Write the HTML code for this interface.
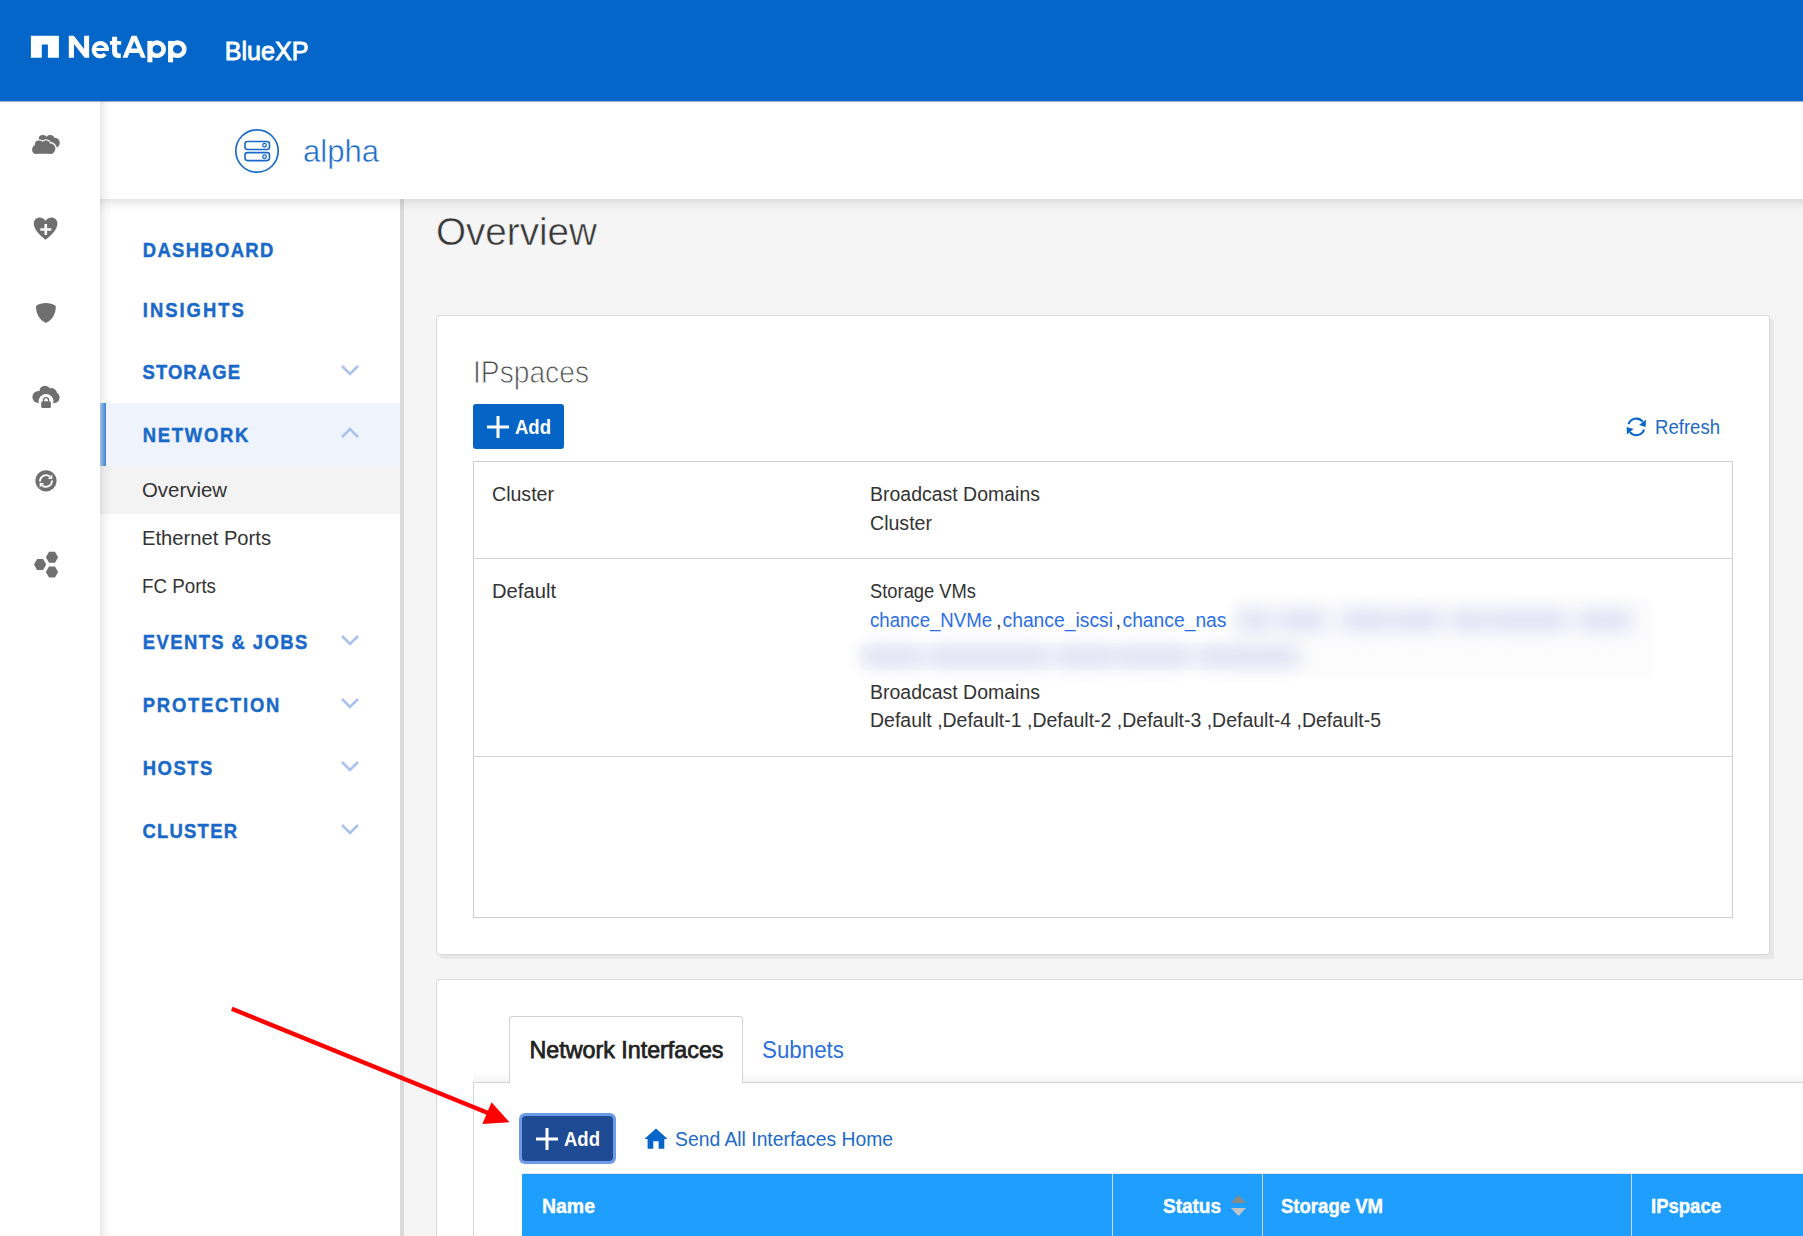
<!DOCTYPE html>
<html><head><meta charset="utf-8"><title>NetApp BlueXP - Network Overview</title>
<style>
html,body{margin:0;padding:0;width:1803px;height:1236px;overflow:hidden;background:#f5f5f5;font-family:"Liberation Sans",sans-serif;}
.a{position:absolute;box-sizing:border-box;}
svg.ov{position:absolute;left:0;top:0;width:1803px;height:1236px;overflow:visible;}
svg text{font-family:"Liberation Sans",sans-serif;}
.b{font-weight:bold;}
</style></head><body>
<!-- top bar -->
<div class="a" style="left:0;top:0;width:1803px;height:101px;background:#0366c8;box-shadow:0 1px 1px rgba(0,40,120,.35);z-index:3"></div>
<!-- icon rail -->
<div class="a" style="left:0;top:101px;width:100px;height:1135px;background:#fff"></div>
<!-- nav panel -->
<div class="a" style="left:100px;top:198px;width:300px;height:1038px;background:#fff"></div>
<div class="a" style="left:100px;top:403px;width:300px;height:63px;background:#eef3fc;z-index:3"></div>
<div class="a" style="left:100px;top:466px;width:300px;height:48px;background:#f3f3f3"></div>
<div class="a" style="left:100px;top:403px;width:6px;height:63px;background:linear-gradient(to right,#a3c2e4,#3a82d3);z-index:3"></div>
<!-- gray bar -->
<div class="a" style="left:400px;top:198px;width:4px;height:1038px;background:#dadada"></div>
<!-- header -->
<div class="a" style="left:100px;top:101px;width:1703px;height:98px;background:#fff;z-index:2"></div>
<div class="a" style="left:100px;top:199px;width:1703px;height:13px;background:linear-gradient(to bottom,rgba(0,0,0,.095),rgba(0,0,0,.04) 45%,rgba(0,0,0,0));z-index:2"></div>
<!-- left inset shadow -->
<div class="a" style="left:100px;top:101px;width:13px;height:1135px;background:linear-gradient(to right,rgba(0,0,0,.085),rgba(0,0,0,.03) 40%,rgba(0,0,0,.01) 75%,rgba(0,0,0,0));z-index:2"></div>

<!-- card 1 -->
<div class="a" style="left:436px;top:315px;width:1334px;height:640px;background:#fff;border:1px solid #d8d8d8;border-radius:3px;box-shadow:4px 4px 1px rgba(0,0,0,.055)"></div>
<!-- table 1 -->
<div class="a" style="left:473px;top:461px;width:1260px;height:457px;border:1px solid #cfcfcf"></div>
<div class="a" style="left:473px;top:558px;width:1260px;height:1px;background:#d2d2d2"></div>
<div class="a" style="left:473px;top:756px;width:1260px;height:1px;background:#d2d2d2"></div>
<!-- Add button 1 -->
<div class="a" style="left:473px;top:404px;width:91px;height:45px;background:#0565c6;border-radius:3px"></div>

<!-- card 2 -->
<div class="a" style="left:436px;top:979px;width:1400px;height:300px;background:#fff;border:1px solid #d8d8d8;border-radius:3px"></div>
<!-- tab panel shadow strip -->
<div class="a" style="left:473px;top:1072px;width:1330px;height:10px;background:linear-gradient(to bottom,rgba(0,0,0,0),rgba(0,0,0,.045))"></div>
<div class="a" style="left:473px;top:1082px;width:1330px;height:200px;border-top:1px solid #d3d3d3;border-left:1px solid #d3d3d3;background:#fff"></div>
<div class="a" style="left:509px;top:1016px;width:234px;height:67px;border:1px solid #d3d3d3;border-bottom:none;border-radius:3px 3px 0 0;background:#fff"></div>
<!-- Add button 2 -->
<div class="a" style="left:519px;top:1113px;width:97px;height:51px;background:#6c9be8;border-radius:6px"></div>
<div class="a" style="left:522px;top:1116px;width:91px;height:45px;background:#1f4a94;border-radius:4px"></div>
<!-- table header -->
<div class="a" style="left:522px;top:1173px;width:1290px;height:70px;background:#1e9fff;border-top:1px solid #e6e6e6"></div>
<div class="a" style="left:1112px;top:1174px;width:1px;height:70px;background:#d0d6dc"></div>
<div class="a" style="left:1262px;top:1174px;width:1px;height:70px;background:#d0d6dc"></div>
<div class="a" style="left:1631px;top:1174px;width:1px;height:70px;background:#d0d6dc"></div>

<!-- blurred storage vms -->
<div class="a" style="left:860px;top:643px;width:372px;height:27px;background:#fbfbfd"></div>
<div class="a" style="left:1232px;top:598px;width:420px;height:78px;background:#fcfcfd;filter:blur(3px)"></div>
<div class="a" style="left:0;top:0;width:1803px;height:1236px;filter:blur(9px)">
<div class="a" style="left:1236px;top:611px;width:36px;height:19px;background:#dcdef3;border-radius:9px"></div>
<div class="a" style="left:1276px;top:611px;width:52px;height:19px;background:#dcdef3;border-radius:9px"></div>
<div class="a" style="left:1339px;top:611px;width:55px;height:19px;background:#dcdef3;border-radius:9px"></div>
<div class="a" style="left:1393px;top:611px;width:50px;height:19px;background:#dcdef3;border-radius:9px"></div>
<div class="a" style="left:1449px;top:611px;width:42px;height:19px;background:#dcdef3;border-radius:9px"></div>
<div class="a" style="left:1490px;top:611px;width:79px;height:19px;background:#dcdef3;border-radius:9px"></div>
<div class="a" style="left:1576px;top:611px;width:57px;height:19px;background:#dcdef3;border-radius:9px"></div>
<div class="a" style="left:861px;top:647px;width:63px;height:19px;background:#dcdef3;border-radius:9px"></div>
<div class="a" style="left:927px;top:647px;width:124px;height:19px;background:#dcdef3;border-radius:9px"></div>
<div class="a" style="left:1054px;top:647px;width:63px;height:19px;background:#dcdef3;border-radius:9px"></div>
<div class="a" style="left:1116px;top:647px;width:76px;height:19px;background:#dcdef3;border-radius:9px"></div>
<div class="a" style="left:1196px;top:647px;width:105px;height:19px;background:#dcdef3;border-radius:9px"></div>
</div>
<svg class="ov" width="1803" height="1236" viewBox="0 0 1803 1236" style="z-index:5">
<!-- logo -->
<path d="M30.9 35.8H58.9V57.85H47.9V44.5H41.8V57.85H30.9Z" fill="#fff"/>
<g fill="#fff">
<path d="M68.8 57.8V35.8H73.8L84.1 49V35.8H89.1V57.8H84.6L74 44V57.8Z"/>
<path d="M112.1 36.8H117.1V41H121.2V44.8H117.1V51.3Q117.1 53.4 119.2 53.4H120.8V57.9H118Q112.1 57.9 112.1 51.8V44.8H109.9V41H112.1Z"/>
<path fill-rule="evenodd" d="M122.5 57.8L131.6 35.7H136.7L145.8 57.8H141L139.1 53H129.4L127.5 57.8ZM131.1 48.4H137.3L134.2 40.9Z"/>
<rect x="94" y="47.9" width="14.9" height="3.1"/>
<rect x="147.4" y="40.9" width="5" height="21.4"/>
<rect x="168.1" y="40.9" width="5" height="21.4"/>
</g>
<g fill="none" stroke="#fff">
<path d="M106.9 49.3A6.6 6.6 0 1 0 105.2 54.2" stroke-width="4"/>
<ellipse cx="156.9" cy="49.2" rx="6.8" ry="6.6" stroke-width="4.6"/>
<ellipse cx="177.4" cy="49.2" rx="6.9" ry="6.6" stroke-width="4.6"/>
</g>
<text x="224.8" y="59.6" font-size="26.3" fill="#fff" stroke="#fff" stroke-width="0.9" textLength="83.6" lengthAdjust="spacingAndGlyphs">BlueXP</text>

<!-- header alpha -->
<circle cx="257" cy="151" r="21.2" fill="none" stroke="#1a6bc9" stroke-width="1.7"/>
<rect x="245" y="141.5" width="24.5" height="8" rx="2.5" fill="none" stroke="#1a6bc9" stroke-width="1.6"/>
<rect x="245" y="152.6" width="24.5" height="8" rx="2.5" fill="none" stroke="#1a6bc9" stroke-width="1.6"/>
<circle cx="264.5" cy="145.2" r="1.8" fill="none" stroke="#1a6bc9" stroke-width="1.3"/>
<circle cx="264.5" cy="156.7" r="1.8" fill="none" stroke="#1a6bc9" stroke-width="1.3"/>
<text x="303" y="162" font-size="30.5" fill="#1a6bc9" stroke="#fff" stroke-width="0.5" textLength="76" lengthAdjust="spacingAndGlyphs">alpha</text>

<!-- nav -->
<g fill="#1a69c8" stroke="#1a69c8" stroke-width="0.45" font-weight="bold" font-size="20.5">
<text transform="translate(142.8 257) scale(0.9 1)" x="0" y="0" textLength="145.0" lengthAdjust="spacing">DASHBOARD</text>
<text transform="translate(142.8 317) scale(0.9 1)" x="0" y="0" textLength="112.2" lengthAdjust="spacing">INSIGHTS</text>
<text transform="translate(142.5 379) scale(0.9 1)" x="0" y="0" textLength="108.3" lengthAdjust="spacing">STORAGE</text>
<text transform="translate(142.8 442) scale(0.9 1)" x="0" y="0" textLength="117.2" lengthAdjust="spacing">NETWORK</text>
<text transform="translate(142.8 649) scale(0.9 1)" x="0" y="0" textLength="182.8" lengthAdjust="spacing">EVENTS &amp; JOBS</text>
<text transform="translate(142.8 712) scale(0.9 1)" x="0" y="0" textLength="151.7" lengthAdjust="spacing">PROTECTION</text>
<text transform="translate(142.8 775) scale(0.9 1)" x="0" y="0" textLength="77.2" lengthAdjust="spacing">HOSTS</text>
<text transform="translate(142.5 838) scale(0.9 1)" x="0" y="0" textLength="105.0" lengthAdjust="spacing">CLUSTER</text>
</g>
<g fill="none" stroke="#a9c2ee" stroke-width="2.6">
<path d="M342 366L350 374L358 366"/>
<path d="M342 437L350 429L358 437"/>
<path d="M342 636L350 644L358 636"/>
<path d="M342 699L350 707L358 699"/>
<path d="M342 762L350 770L358 762"/>
<path d="M342 825L350 833L358 825"/>
</g>
<g fill="#333" font-size="20">
<text x="142" y="497" textLength="85" lengthAdjust="spacingAndGlyphs">Overview</text>
<text x="142" y="545" textLength="129" lengthAdjust="spacingAndGlyphs">Ethernet Ports</text>
<text x="142" y="592.6" textLength="74" lengthAdjust="spacingAndGlyphs">FC Ports</text>
</g>

<!-- content -->
<text x="436" y="244.6" font-size="38.7" fill="#383838" stroke="#f5f5f5" stroke-width="0.5" textLength="161" lengthAdjust="spacingAndGlyphs">Overview</text>
<text x="473" y="383.2" font-size="32" fill="#4a4a4a" stroke="#fff" stroke-width="0.9" textLength="116" lengthAdjust="spacingAndGlyphs">IPspaces</text>
<path d="M498 416V438M487 427H509" stroke="#fff" stroke-width="3"/>
<text x="515" y="433.7" font-size="20.8" font-weight="bold" fill="#fff" textLength="36" lengthAdjust="spacingAndGlyphs">Add</text>

<!-- refresh icon -->
<g fill="none" stroke="#0a66c8" stroke-width="2.1">
<path d="M1628.5 424.1A8.3 8.3 0 0 1 1642.7 421.6"/>
<path d="M1644.1 429.7A8.3 8.3 0 0 1 1629.9 432.2"/>
</g>
<path d="M1645.9 419.4L1645.7 426.9L1639.1 424.9Z" fill="#0a66c8"/>
<path d="M1626.7 427L1626.9 434.4L1633.5 429Z" fill="#0a66c8"/>
<text x="1655" y="434" font-size="21" fill="#1d6bc8" textLength="65" lengthAdjust="spacingAndGlyphs">Refresh</text>

<g fill="#333" font-size="20">
<text x="492" y="500.8" textLength="62" lengthAdjust="spacingAndGlyphs">Cluster</text>
<text x="870" y="500.6" textLength="170" lengthAdjust="spacingAndGlyphs">Broadcast Domains</text>
<text x="870" y="529.7" textLength="62" lengthAdjust="spacingAndGlyphs">Cluster</text>
<text x="492" y="597.7" textLength="64" lengthAdjust="spacingAndGlyphs">Default</text>
<text x="870" y="597.6" textLength="106" lengthAdjust="spacingAndGlyphs">Storage VMs</text>
<text x="870" y="698.8" textLength="170" lengthAdjust="spacingAndGlyphs">Broadcast Domains</text>
<text x="870" y="727.3" textLength="511" lengthAdjust="spacingAndGlyphs">Default ,Default-1 ,Default-2 ,Default-3 ,Default-4 ,Default-5</text>
<text x="996" y="626.5">,</text>
<text x="1115.5" y="626.5">,</text>
</g>
<g fill="#2b6ee6" font-size="20">
<text x="870" y="626.5" textLength="122" lengthAdjust="spacingAndGlyphs">chance_NVMe</text>
<text x="1002.5" y="626.5" textLength="110.5" lengthAdjust="spacingAndGlyphs">chance_iscsi</text>
<text x="1122.5" y="626.5" textLength="104" lengthAdjust="spacingAndGlyphs">chance_nas</text>
</g>

<!-- tabs -->
<text x="529.5" y="1058.2" font-size="23.2" fill="#222" stroke="#222" stroke-width="0.75" textLength="194" lengthAdjust="spacingAndGlyphs">Network Interfaces</text>
<text x="762" y="1057.7" font-size="23" fill="#2a6fdc" textLength="82" lengthAdjust="spacingAndGlyphs">Subnets</text>

<path d="M547 1128V1150M536 1139H558" stroke="#fff" stroke-width="3"/>
<text x="564" y="1145.7" font-size="20.8" font-weight="bold" fill="#fff" textLength="36" lengthAdjust="spacingAndGlyphs">Add</text>
<!-- house -->
<path d="M656 1128.4L644.4 1138.9H647.6V1148.7H653.3V1141.2H658.6V1148.7H664.3V1138.9H667.6Z" fill="#0366c8"/>
<text x="675" y="1145.7" font-size="19.6" fill="#1d6bc8" textLength="218" lengthAdjust="spacingAndGlyphs">Send All Interfaces Home</text>

<g fill="#fff" stroke="#fff" stroke-width="0.4" font-size="20.3" font-weight="bold">
<text x="542" y="1213.1" textLength="53" lengthAdjust="spacingAndGlyphs">Name</text>
<text x="1163" y="1213.3" textLength="58" lengthAdjust="spacingAndGlyphs">Status</text>
<text x="1281" y="1213.2" textLength="102" lengthAdjust="spacingAndGlyphs">Storage VM</text>
<text x="1651" y="1213.2" textLength="70" lengthAdjust="spacingAndGlyphs">IPspace</text>
</g>
<path d="M1238.5 1195L1246 1203H1231Z" fill="#898989"/>
<path d="M1231 1208H1246L1238.5 1216Z" fill="#c3c3c3"/>

<!-- red arrow -->
<path d="M231.8 1008.8L488 1113" stroke="#ff0000" stroke-width="4.4"/>
<path d="M509.5 1122.3L491.5 1102.3L482.4 1124Z" fill="#ff0000"/>

<!-- rail icons -->
<g fill="#6f6f6f">
<!-- clouds -->
<circle cx="42.8" cy="139.1" r="4.1"/>
<circle cx="50.2" cy="139.1" r="4.1"/>
<circle cx="54.7" cy="142.8" r="5.1"/>
<rect x="40" y="137.5" width="14" height="8" rx="1"/>
<g fill="#fff" stroke="#fff" stroke-width="2.9"><circle cx="39" cy="144.7" r="4.1"/><circle cx="45.9" cy="144.7" r="4.1"/><circle cx="50.3" cy="148.6" r="5.1"/><circle cx="36.2" cy="149.8" r="4.1"/><rect x="33" y="145" width="21" height="8.8" rx="3.2"/></g>
<circle cx="39" cy="144.7" r="4.1"/><circle cx="45.9" cy="144.7" r="4.1"/><circle cx="50.3" cy="148.6" r="5.1"/><circle cx="36.2" cy="149.8" r="4.1"/><rect x="33" y="145" width="21" height="8.8" rx="3.2"/>
<!-- heart plus -->
<path d="M45.6 239.8C40 235 33.8 230 33.8 223.5C33.8 219.8 36.5 217.6 39.8 217.6C42.3 217.6 44.3 219 45.6 220.8C46.9 219 48.9 217.6 51.4 217.6C54.7 217.6 57.4 219.8 57.4 223.5C57.4 230 51.2 235 45.6 239.8Z"/>
<!-- shield -->
<path d="M36 306C39 303.8 42.5 303 45.9 303C49.3 303 52.8 303.8 55.8 306C56 315 51.5 320 45.9 323.1C40.3 320 35.8 315 36 306Z"/>
<!-- cloud lock -->
<circle cx="38.5" cy="397" r="6.1"/><circle cx="45" cy="391.3" r="5.6"/><circle cx="51.6" cy="393.5" r="5.4"/><circle cx="53.9" cy="397.5" r="5.7"/>
<rect x="38.5" y="391" width="15.5" height="12.1"/>
<circle cx="46.05" cy="401.4" r="7.45" fill="#fff"/>
<rect x="41.2" y="401.2" width="9.7" height="6.8" rx="1.5"/>
<path d="M43.5 401.6V400.2A2.55 2.55 0 0 1 48.6 400.2V401.6" fill="none" stroke="#6f6f6f" stroke-width="1.4"/>
<!-- sync circle -->
<circle cx="46" cy="480.8" r="10.6"/>
<!-- hexagons -->
<path d="M34.0 564.6L37.1 559.1H43.1L46.2 564.6L43.1 570.1H37.1Z"/>
<path d="M45.9 557.2L49.0 551.7H55.0L58.1 557.2L55.0 562.7H49.0Z"/>
<path d="M45.9 572.1L49.0 566.6H55.0L58.1 572.1L55.0 577.6H49.0Z"/>
</g>
<path d="M40.3 229.5H51.3M45.8 224V235" stroke="#fff" stroke-width="2.6"/>
<g fill="none" stroke="#fff" stroke-width="1.9">
<path d="M40.1 481.6A5.9 5.9 0 0 1 50 476.8"/>
<path d="M51.9 480.4A5.9 5.9 0 0 1 42 485.2"/>
</g>
<path d="M52.3 474.6V479H47.9Z" fill="#fff"/>
<path d="M39.7 487.4V483H44.1Z" fill="#fff"/>
</svg>
</body></html>
